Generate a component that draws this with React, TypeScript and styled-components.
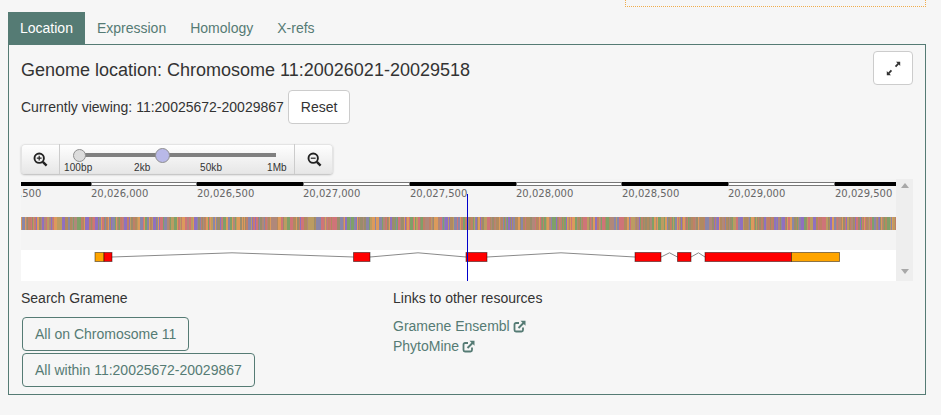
import React from "react";
import styled, { createGlobalStyle } from "styled-components";

const Global = createGlobalStyle`
  html, body { margin: 0; padding: 0; background: #f6f6f6; }
  body { font-family: "Liberation Sans", Arial, sans-serif; font-size: 14px; line-height: 20px; color: #333; }
  * { box-sizing: border-box; }
`;
const Page = styled.div`width: 941px; height: 415px; padding: 0 15px 0 8px; overflow: hidden;`;
const TopRow = styled.div`display: flex; justify-content: flex-end; height: 7px; margin-bottom: 5px;`;
const DottedBox = styled.div`width: 301px; border: 1px dotted #f0ad4e; border-top: 0;`;
const Tabs = styled.div`display: flex; height: 32px;`;
const Tab = styled.div<{ $active?: boolean }>`
  padding: 6px 12px; color: ${p => (p.$active ? "#fff" : "#557b74")};
  background: ${p => (p.$active ? "#557b74" : "transparent")};
`;
const Panel = styled.div`border: 1px solid #557b74; height: 351px; padding: 6px 12px 0;`;
const HeaderRow = styled.div`display: flex; justify-content: space-between; height: 34px;`;
const Title = styled.div`font-size: 18px; line-height: 20px; margin-top: 9px;`;
const Button = styled.button`
  display: inline-flex; align-items: center; justify-content: center; height: 34px; padding: 6px 12px;
  font: inherit; color: #333; background: #fff; border: 1px solid #ccc; border-radius: 4px;
`;
const ExpandButton = styled(Button)`width: 40px; padding: 0;`;
const ViewRow = styled.div`display: flex; align-items: center; gap: 4px; margin-top: 5px;`;
const Toolbar = styled.div`
  display: flex; width: 312px; height: 30px; margin-top: 20px; border-radius: 4px;
  background: linear-gradient(#fff, #e6e6e6); box-shadow: 0 1px 2px rgba(0,0,0,.25), inset 0 0 0 1px #e4e4e4;
`;
const ZoomButton = styled.div<{ $side: "left" | "right" }>`
  width: 39px; display: flex; align-items: center; justify-content: center;
  ${p => (p.$side === "left" ? "border-right" : "border-left")}: 1px solid #ccc;
`;
const Slider = styled.div`position: relative; flex: 1;`;
const Track = styled.div`position: absolute; left: 20px; top: 9px; width: 196px; height: 4px; background: #808080;`;
const Handle = styled.div<{ $left: number; $size: number; $color: string }>`
  position: absolute; left: ${p => p.$left}px; top: ${p => 11 - p.$size / 2}px;
  width: ${p => p.$size}px; height: ${p => p.$size}px; border-radius: 50%;
  background: ${p => p.$color}; border: 1px solid #8f8f8f;
`;
const Tick = styled.span<{ $left: number }>`
  position: absolute; left: ${p => p.$left}px; top: 18px; font-size: 10px; line-height: 12px; color: #333;
  letter-spacing: .1px;
`;
const Browser = styled.div`display: flex; width: 892px; height: 102px; margin-top: 5px; background: #f4f4f4;`;
const Scrollbar = styled.div`
  width: 17px; background: #eee; display: flex; flex-direction: column; justify-content: space-between;
  align-items: center; padding: 3px 0 6px; color: #a8a8a8;
`;
const Columns = styled.div`display: grid; grid-template-columns: 372px 1fr; margin-top: 7px;`;
const Heading = styled.div`height: 20px; margin-bottom: 8px;`;
const ButtonStack = styled.div`margin-top: 9px;`;
const OutlineButton = styled.div`
  display: flex; width: fit-content; height: 34px; align-items: center; padding: 0 12px; margin-left: 1px; margin-bottom: 2px;
  color: #557b74; border: 1px solid #557b74; border-radius: 4px;
`;
const LinkRow = styled.div`display: flex; align-items: center; gap: 3px; height: 20px; color: #557b74;`;

const exons: [number, number, string][] = [
  [95, 104, "#ffa500"], [104, 112, "#ff0000"], [353.5, 370, "#ff0000"], [466, 487, "#ff0000"],
  [635, 661, "#ff0000"], [677.5, 691, "#ff0000"], [705, 791.5, "#ff0000"], [791.5, 839.5, "#ffa500"],
];
const introns = [[112, 232, 353.5], [370, 418, 466], [487, 561, 635], [661, 669.5, 677.5], [691, 698.5, 705]];
const bars: [number, number, boolean][] = [
  [21, 91, true], [91, 197, false], [197, 303, true], [303, 410, false], [410, 516, true],
  [516, 622, false], [622, 728, true], [728, 835, false], [835, 896, true],
];
const labels = [
  [-16, "20,025,500"], [91, "20,026,000"], [197, "20,026,500"], [303, "20,027,000"], [410, "20,027,500"],
  [516, "20,028,000"], [622, "20,028,500"], [728, "20,029,000"], [835, "20,029,500"],
] as [number, string][];

const palette = ["#b08a60", "#8a86a8", "#7fa068", "#8f70c0", "#cf7478", "#dc9a5c", "#9a8c6c", "#b0887a", "#bb9c62", "#c07f68"];
function makeStripes() {
  const out: { x: number; w: number; c: string }[] = [];
  let s = 12345, x = 0;
  const rnd = () => ((s = (s * 1664525 + 1013904223) >>> 0) / 4294967296);
  while (x < 875) {
    const w = 1 + Math.floor(rnd() * rnd() * 3.5);
    out.push({ x, w, c: palette[Math.floor(rnd() * palette.length)] });
    x += w;
  }
  return out;
}
const stripes = makeStripes();

const ZoomIcon = ({ plus }: { plus?: boolean }) => (
  <svg width="15" height="15" viewBox="0 0 15 15" fill="none" stroke="#222">
    <circle cx="6.2" cy="6.2" r="4.7" strokeWidth="1.9" />
    <path d="M9.8 9.8 L13.6 13.6" strokeWidth="2.4" />
    <path d={plus ? "M3.8 6.2H8.6M6.2 3.8V8.6" : "M3.8 6.2H8.6"} strokeWidth="1.2" />
  </svg>
);

const ResizeIcon = () => (
  <svg width="15" height="15" viewBox="0 0 15 15" fill="#333">
    <path d="M10 .8h4.2V5l-1.4-1.4-2.6 2.6-1.3-1.3 2.6-2.6z" />
    <path d="M5 14.2H.8V10l1.4 1.4 2.6-2.6 1.3 1.3-2.6 2.6z" />
  </svg>
);

const ExternalIcon = () => (
  <svg width="13" height="13" viewBox="0 0 13 13" fill="none" stroke="currentColor">
    <path d="M6 3H3a1.5 1.5 0 0 0-1.5 1.5v5.5A1.5 1.5 0 0 0 3 11.5h5.5A1.5 1.5 0 0 0 10 10V7.5" strokeWidth="1.8" />
    <path d="M5.5 8L11 2.5" strokeWidth="2" />
    <path d="M7.5 .8h5v5z" fill="currentColor" stroke="none" />
  </svg>
);

const TrackCanvas = () => (
  <svg width="875" height="102" viewBox="21 179 875 102" style={{ display: "block" }}>
    {bars.map(([a, b, black]) =>
      black ? (
        <rect key={a} x={a} y={182} width={b - a} height={4} fill="#000" />
      ) : (
        <rect key={a} x={a + 0.5} y={182.5} width={b - a - 1} height={3} fill="#fff" stroke="#777" />
      )
    )}
    {labels.map(([x, t]) => (
      <text key={t} x={x} y={197} fontFamily="'DejaVu Sans', sans-serif" fontSize="10" fill="#666">{t}</text>
    ))}
    <g transform="translate(21 217)">
      {stripes.map(s => <rect key={s.x} x={s.x} y={0} width={s.w} height={13} fill={s.c} />)}
    </g>
    <rect x={21} y={250} width={875} height={31} fill="#fff" />
    {introns.map(([a, m, b]) => (
      <polyline key={a} points={`${a},257 ${m},252.8 ${b},257`} fill="none" stroke="#8a8a8a" strokeWidth="1" />
    ))}
    {exons.map(([a, b, c]) => (
      <rect key={a} x={a} y={252.5} width={b - a} height={9} fill={c} stroke="#000" strokeOpacity=".45" />
    ))}
    <line x1={467.5} x2={467.5} y1={194} y2={281} stroke="#0000cc" strokeWidth="1" />
  </svg>
);

export default function App() {
  return (
    <Page>
      <Global />
      <TopRow><DottedBox /></TopRow>
      <Tabs>
        <Tab $active>Location</Tab>
        <Tab>Expression</Tab>
        <Tab>Homology</Tab>
        <Tab>X-refs</Tab>
      </Tabs>
      <Panel>
        <HeaderRow>
          <Title>Genome location: Chromosome 11:20026021-20029518</Title>
          <ExpandButton><ResizeIcon /></ExpandButton>
        </HeaderRow>
        <ViewRow>
          <span>Currently viewing: 11:20025672-20029867</span>
          <Button>Reset</Button>
        </ViewRow>
        <Toolbar>
          <ZoomButton $side="left"><ZoomIcon plus /></ZoomButton>
          <Slider>
            <Track />
            <Handle $left={13} $size={13} $color="#dcdcdc" />
            <Handle $left={95} $size={15} $color="#b9b9e8" />
            <Tick $left={4}>100bp</Tick>
            <Tick $left={74}>2kb</Tick>
            <Tick $left={140}>50kb</Tick>
            <Tick $left={207}>1Mb</Tick>
          </Slider>
          <ZoomButton $side="right"><ZoomIcon /></ZoomButton>
        </Toolbar>
        <Browser>
          <TrackCanvas />
          <Scrollbar>
            <svg width="10" height="6"><path d="M1 6L5 1L9 6z" fill="currentColor" /></svg>
            <svg width="10" height="6"><path d="M1 0L5 5L9 0z" fill="currentColor" /></svg>
          </Scrollbar>
        </Browser>
        <Columns>
          <div>
            <Heading>Search Gramene</Heading>
            <ButtonStack>
              <OutlineButton>All on Chromosome 11</OutlineButton>
              <OutlineButton>All within 11:20025672-20029867</OutlineButton>
            </ButtonStack>
          </div>
          <div>
            <Heading>Links to other resources</Heading>
            <LinkRow>Gramene Ensembl <ExternalIcon /></LinkRow>
            <LinkRow>PhytoMine <ExternalIcon /></LinkRow>
          </div>
        </Columns>
      </Panel>
    </Page>
  );
}
